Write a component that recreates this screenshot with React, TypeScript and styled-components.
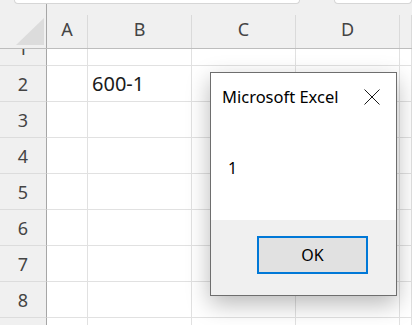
import React from 'react';
import styled, { createGlobalStyle } from 'styled-components';

const GlobalStyle = createGlobalStyle`
    html, body {
        margin: 0;
        padding: 0;
        background: #f0f0f0;
        font-family: 'Noto Sans', 'Open Sans', sans-serif;
    }
`;

const Window = styled.div`
    position: relative;
    width: 412px;
    height: 325px;
    overflow: hidden;
    background: #f0f0f0;
`;

const TopBar = styled.div`
    display: flex;
    height: 4px;
    padding-left: 14px;
    gap: 34px;
`;

const TopField = styled.div<{ width: number }>`
    width: ${({ width }) => width}px;
    height: 3px;
    background: #ffffff;
    border: 1px solid #d6d6d6;
    border-top: none;
    border-radius: 0 0 5px 5px;
`;

const COLS = '47px 41px 104px 104px 104px 1fr';

const HeaderRow = styled.div`
    display: grid;
    grid-template-columns: ${COLS};
    height: 45px;
    border-bottom: 1px solid #bdbdbd;
    box-sizing: border-box;
`;

const Corner = styled.div`
    position: relative;
    border-right: 1px solid #a6a6a6;
`;

const CornerTriangle = styled.div`
    position: absolute;
    left: 16px;
    top: 14px;
    width: 28px;
    height: 27px;
    background: #dcdcdc;
    clip-path: polygon(100% 0, 100% 100%, 0 100%);
`;

const ColHead = styled.div`
    display: flex;
    align-items: center;
    justify-content: center;
    padding-bottom: 5px;
    margin-top: 11px;
    border-right: 1px solid #dadada;
    font-size: 18px;
    color: #444444;
`;

const Body = styled.div`
    height: 280px;
    overflow: hidden;
`;

const BodyInner = styled.div`
    margin-top: -19px;
`;

const Row = styled.div`
    display: grid;
    grid-template-columns: ${COLS};
    height: 36px;
`;

const RowHead = styled.div`
    display: flex;
    align-items: center;
    justify-content: center;
    background: #f0f0f0;
    border-right: 1px solid #a6a6a6;
    border-bottom: 1px solid #dcdcdc;
    font-size: 18px;
    color: #444444;
`;

const Cell = styled.div`
    display: flex;
    align-items: center;
    padding-left: 4px;
    background: #ffffff;
    border-right: 1px solid #e1e1e1;
    border-bottom: 1px solid #e1e1e1;
    font-size: 20px;
    color: #1a1a1a;
    white-space: nowrap;
`;

const Dialog = styled.div`
    position: absolute;
    left: 210px;
    top: 72px;
    width: 187px;
    height: 224px;
    box-sizing: border-box;
    display: flex;
    flex-direction: column;
    background: #ffffff;
    border: 1px solid #6e6e6e;
    box-shadow: 0 8px 22px rgba(0, 0, 0, 0.28);
`;

const TitleBar = styled.div`
    display: flex;
    align-items: center;
    justify-content: space-between;
    height: 47px;
    padding: 0 16px 0 11px;
    font-size: 16.5px;
    color: #000000;
`;

const Message = styled.div`
    flex: 1;
    padding: 37px 0 0 17px;
    font-size: 16px;
    color: #000000;
`;

const Footer = styled.div`
    display: flex;
    justify-content: flex-end;
    height: 75px;
    box-sizing: border-box;
    padding: 16px 28px 0 0;
    background: #f0f0f0;
`;

const OkButton = styled.button`
    width: 111px;
    height: 38px;
    box-sizing: border-box;
    background: #e1e1e1;
    border: 2px solid #0078d7;
    font-family: inherit;
    font-size: 16px;
    color: #000000;
    padding: 0;
`;

const CloseIcon = () => (
    <svg width="16" height="16" viewBox="0 0 16 16">
        <path d="M0.5 0.5 L15.5 15.5 M15.5 0.5 L0.5 15.5" stroke="#1a1a1a" strokeWidth="1" fill="none" />
    </svg>
);

const columns = ['A', 'B', 'C', 'D', ''];
const rows: { n: number; b?: string }[] = [
    { n: 1 },
    { n: 2, b: '600-1' },
    { n: 3 },
    { n: 4 },
    { n: 5 },
    { n: 6 },
    { n: 7 },
    { n: 8 },
    { n: 9 },
];

const App: React.FC = () => (
    <>
        <GlobalStyle />
        <Window>
            <TopBar>
                <TopField width={301} />
                <TopField width={80} />
            </TopBar>
            <HeaderRow>
                <Corner>
                    <CornerTriangle />
                </Corner>
                {columns.map((c, i) => (
                    <ColHead key={i}>{c}</ColHead>
                ))}
            </HeaderRow>
            <Body>
                <BodyInner>
                    {rows.map((r) => (
                        <Row key={r.n}>
                            <RowHead>{r.n}</RowHead>
                            <Cell />
                            <Cell>{r.b}</Cell>
                            <Cell />
                            <Cell />
                            <Cell />
                        </Row>
                    ))}
                </BodyInner>
            </Body>
            <Dialog>
                <TitleBar>
                    <span>Microsoft Excel</span>
                    <CloseIcon />
                </TitleBar>
                <Message>1</Message>
                <Footer>
                    <OkButton>OK</OkButton>
                </Footer>
            </Dialog>
        </Window>
    </>
);

export default App;
